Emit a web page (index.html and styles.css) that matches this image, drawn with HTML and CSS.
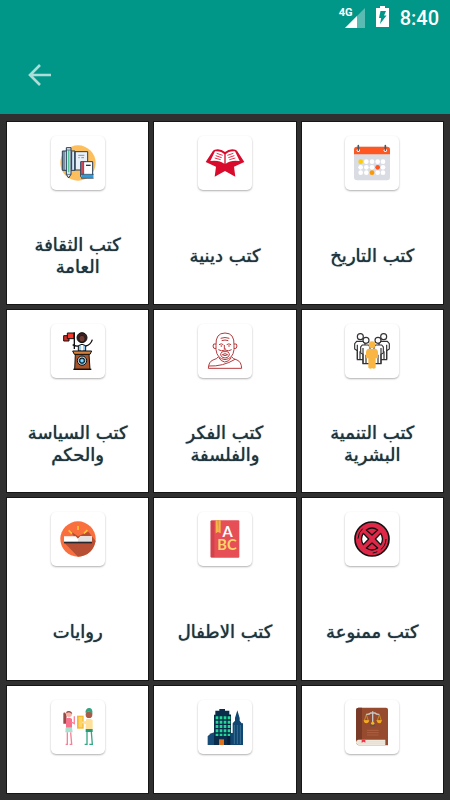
FILE: index.html
```html
<!DOCTYPE html>
<html lang="ar">
<head>
<meta charset="utf-8">
<meta name="viewport" content="width=device-width, initial-scale=1">
<title>كتب</title>
<link rel="stylesheet" href="styles.css">
</head>
<body>
<header class="header">
  <div class="status">
    <div class="signal">
      <span class="network">4G</span>
      <svg width="20" height="20" viewBox="0 0 20 20" aria-hidden="true"><path d="M20 0V20H0Z" fill="#fff" opacity=".35"/><path d="M12 8V20H0Z" fill="#fff"/></svg>
    </div>
    <svg class="battery" width="13" height="21" viewBox="0 0 13 21" aria-hidden="true"><path d="M4 0h5v2h4v19H0V2h4Z" fill="#fff"/><path d="M4.500 5H10L8 9.500h2.500L4 18l1.200-6H3Z" fill="#009788"/></svg>
    <time class="time">8:40</time>
  </div>
  <nav class="toolbar">
    <button class="back" type="button" aria-label="رجوع">
      <svg width="24" height="24" viewBox="0 0 24 24" aria-hidden="true"><path d="M23 12H2M12 2L2 12L12 22" fill="none" stroke="#acddd8" stroke-width="2.600"/></svg>
    </button>
  </nav>
</header>
<main class="grid">
  <a class="card" href="#culture">
    <span class="tile"><svg class="icon" viewBox="0 0 108 108" aria-hidden="true">
      <circle cx="54" cy="54" r="53" fill="#fdbf5e"/>
      <g stroke="#243b53" stroke-width="3">
        <path d="M7 18h38v58H7Z" fill="#d5e6f5"/><path d="M45 20h38v55H45Z" fill="#e9f0f8"/>
        <path d="M12 18v57M35 20v54M45 20v55" fill="none"/>
        <path d="M55 31h18M55 38h4m5 0h8" stroke="#8492a6" fill="none"/>
        <path d="M19 8h14v80l-7 11l-7-11Z" fill="#e8eef7"/><path d="M26 16v66" stroke="#53c59b" stroke-width="5"/>
        <path d="M19 15h14M19 88h14" stroke-width="2"/>
        <path d="M62 50h36v48H66q-4 0-4-5Z" fill="#fff"/>
      </g>
      <path d="M63 51h8v38h-8Z" fill="#cf4856"/><path d="M71 50v39" stroke="#243b53" stroke-width="2"/>
      <path d="M64 88h36v11H64Z" fill="#2f9bd8"/><path d="M63 88h38M63 100h38" stroke="#243b53" stroke-width="2"/>
      <path d="M78 61h14" stroke="#243b53" stroke-width="4"/>
    </svg></span>
    <span class="label" dir="rtl">كتب الثقافة العامة</span>
  </a>
  <a class="card" href="#religion">
    <span class="tile"><svg class="icon" viewBox="0 0 108 108" aria-hidden="true">
      <path d="M23 14Q41 10 54 21Q67 10 85 14L90 17L112 51L81 65L85 95L54 78L23 95L27 65L-4 51L18 17Z" fill="#d90b2c"/>
      <path d="M24 19Q42 17 52 28V56Q36 44 10 48Z" fill="#fff"/><path d="M84 19Q66 17 56 28V56Q72 44 98 48Z" fill="#fff"/>
      <path d="M29 25l18 6M26 32l18 6M23 39l18 5M79 25l-18 6M82 32l-18 6M85 39l-18 5" fill="none" stroke="#d90b2c" stroke-width="2.500"/>
    </svg></span>
    <span class="label" dir="rtl">كتب دينية</span>
  </a>
  <a class="card" href="#history">
    <span class="tile"><svg class="icon" viewBox="0 0 108 108" aria-hidden="true">
      <rect x="0" y="5" width="108" height="101" rx="9" fill="#d9dce2"/>
      <path d="M0 28V14Q0 5 9 5H99Q108 5 108 14V28Z" fill="#ff5722"/>
      <g fill="#fff">
        <circle cx="37" cy="50" r="7"/><circle cx="54" cy="50" r="7"/><circle cx="71" cy="50" r="7"/><circle cx="87" cy="50" r="7"/>
        <circle cx="20" cy="67" r="7"/><circle cx="37" cy="67" r="7"/><circle cx="54" cy="67" r="7"/><circle cx="87" cy="67" r="7"/>
        <circle cx="20" cy="83" r="7"/><circle cx="37" cy="83" r="7"/><circle cx="71" cy="83" r="7"/><circle cx="87" cy="83" r="7"/>
        <circle cx="13" cy="16" r="5"/><circle cx="94" cy="16" r="5"/>
      </g>
      <circle cx="20" cy="50" r="7" fill="#ffcd00"/><circle cx="71" cy="67" r="7" fill="#ff5722"/><circle cx="54" cy="83" r="7" fill="#ff9800"/>
      <path d="M13 2v14M94 2v14" stroke="#455a64" stroke-width="5" stroke-linecap="round"/>
    </svg></span>
    <span class="label" dir="rtl">كتب التاريخ</span>
  </a>
  <a class="card" href="#politics">
    <span class="tile"><svg class="icon" viewBox="0 0 108 108" aria-hidden="true">
      <g stroke="#111" stroke-width="3">
        <path d="M11 8h16v16H11Z" fill="#d82d22"/><path d="M22 0h20v17H22Z" fill="#f23b2c"/>
        <path d="M43-2v50" fill="none" stroke-width="4"/>
        <circle cx="66" cy="14" r="15" fill="#3a2022"/><ellipse cx="66" cy="17" rx="9" ry="10" fill="#6e3b33" stroke-width="2"/>
        <path d="M55 54V38Q66 30 77 38V54Z" fill="#8fcdf3"/><path d="M66 36v17" stroke="#fff" stroke-width="7"/>
        <path d="M55 39Q45 40 38 35M77 39Q92 36 97 20" fill="none" stroke-width="4"/>
        <path d="M46 63h41l3 46H44Z" fill="#a95428"/><path d="M38 54h57l-5 10H43Z" fill="#d88138"/>
        <circle cx="66" cy="83" r="14" fill="#b7cbd5"/><circle cx="66" cy="83" r="8" fill="#168bc8"/>
        <path d="M40 109h54" stroke-width="4"/>
      </g>
      <circle cx="66" cy="83" r="4" fill="#8fdcff"/>
    </svg></span>
    <span class="label" dir="rtl">كتب السياسة والحكم</span>
  </a>
  <a class="card" href="#philosophy">
    <span class="tile"><svg class="icon" viewBox="0 0 108 108" aria-hidden="true">
      <g fill="none" stroke="#b63a3d" stroke-width="3">
        <path d="M27 37Q25 0 54 0Q83 0 81 37V50Q78 77 54 80Q30 77 27 50Z"/>
        <path d="M27 33Q18 30 18 39T27 47M81 33Q90 30 90 39T81 47"/>
        <path d="M41 16q13-5 26 0M44 23q10-4 20 0M36 35q7-5 13 0M59 35q7-5 13 0M52 36v12h5"/>
        <path d="M34 50Q43 56 54 51Q65 56 74 50M41 66q0-12 13-10q13-2 13 10q-3 9-13 9t-13-9Z"/>
        <path d="M46 65q8-6 16 0q-8 6-16 0M34 71Q32 77 18 81Q5 86 4 106H104Q103 86 90 81Q76 77 74 71"/>
        <path d="M5 99Q48 101 84 79M35 73q6 12 18 14q14-1 20-13"/>
      </g>
      <circle cx="43" cy="39" r="2.500" fill="#b63a3d"/><circle cx="66" cy="39" r="2.500" fill="#b63a3d"/>
    </svg></span>
    <span class="label" dir="rtl">كتب الفكر والفلسفة</span>
  </a>
  <a class="card" href="#development">
    <span class="tile"><svg class="icon" viewBox="0 0 108 108" aria-hidden="true">
      <g fill="#fff" stroke="#333" stroke-width="3.500">
        <circle cx="19" cy="11" r="9"/><path d="M8 25H29L33 31V80H10V53L2 48V32Z"/><path d="M10 35v44M18 55v25" fill="none"/>
        <circle cx="89" cy="11" r="9"/><path d="M100 25H79L75 31V80H98V53L106 48V32Z"/><path d="M98 35v44M90 55v25" fill="none"/>
        <circle cx="36" cy="22" r="9"/><path d="M25 36H43L48 42V92H27V64L20 60V42Z"/><path d="M27 45v47M36 65v27" fill="none"/>
        <circle cx="72" cy="22" r="9"/><path d="M83 36H65L60 42V92H81V64L88 60V42Z"/><path d="M81 45v47M72 65v27" fill="none"/>
      </g>
      <g fill="#f9b642"><circle cx="54" cy="35" r="10"/><path d="M43 47H65Q72 49 72 57V76H65V104Q59 110 54 105Q49 110 43 104V76H36V57Q36 49 43 47Z"/></g>
    </svg></span>
    <span class="label" dir="rtl">كتب التنمية البشرية</span>
  </a>
  <a class="card" href="#novels">
    <span class="tile"><svg class="icon" viewBox="0 0 108 108" aria-hidden="true">
      <circle cx="54" cy="54" r="53" fill="#f9703e"/>
      <path d="M13 65L54 107Q97 104 107 60L85 32L54 46L28 28L42 46Z" fill="#b64f34"/>
      <path d="M26 28L36 38M54 15V27M82 27L72 37" stroke="#ffc532" stroke-width="5"/>
      <path d="M12 46H47L54 53L61 46H96V64H12Z" fill="#fff"/><path d="M54 53L61 46H96V63H54Z" fill="#e4e3e1"/>
      <path d="M12 62H96V67H12Z" fill="#29252a"/>
    </svg></span>
    <span class="label" dir="rtl">روايات</span>
  </a>
  <a class="card" href="#children">
    <span class="tile"><svg class="icon" viewBox="0 0 108 108" aria-hidden="true">
      <rect x="11" y="-2" width="86" height="112" rx="3" fill="#e64f55"/><path d="M11 0h11v108H11Z" fill="#d2424c"/>
      <path d="M26-2H41V37L33 33L26 37Z" fill="#f2b64b"/><path d="M31-2h4v35" fill="#dc943b"/>
      <text class="abc"><tspan class="abc-top" x="62" y="48">A</tspan><tspan class="abc-bottom" x="60" y="86">BC</tspan></text>
    </svg></span>
    <span class="label" dir="rtl">كتب الاطفال</span>
  </a>
  <a class="card" href="#banned">
    <span class="tile"><svg class="icon" viewBox="0 0 108 108" aria-hidden="true">
      <circle cx="54" cy="54" r="51" fill="#df2848" stroke="#111" stroke-width="5"/>
      <g fill="#fff" stroke="#111" stroke-width="4" stroke-linejoin="round">
        <path d="M37 27Q54 15 71 27L54 42Z" fill="#df2848"/><path d="M37 81Q54 93 71 81L54 66Z" fill="#df2848"/>
        <path d="M28 37Q17 54 28 71L44 54Z"/><path d="M80 37Q91 54 80 71L64 54Z"/>
      </g>
      <path d="M12 53Q13 33 26 23M96 54Q95 75 80 86M56 96Q64 95 70 92" fill="none" stroke="#111" stroke-width="3"/>
    </svg></span>
    <span class="label" dir="rtl">كتب ممنوعة</span>
  </a>
  <a class="card" href="#exchange" aria-label="تبادل الكتب">
    <span class="tile"><svg class="icon" viewBox="0 0 108 108" aria-hidden="true">
      <path d="M10 15Q9 10 16 11L20 20L18 44H10Z" fill="#984a46"/>
      <circle cx="27" cy="15" r="9" fill="#f5b5a6"/><path d="M18 13Q19 4 28 6Q36 7 37 15L27 10Z" fill="#a14c49"/>
      <path d="M18 28Q28 24 36 30V56H18Z" fill="#f5718c"/><path d="M34 39L43 44V22" fill="none" stroke="#f9879b" stroke-width="4"/>
      <path d="M17 56H36L38 70H16Z" fill="#a7e2d1"/>
      <path d="M22 70V106H17M32 70L35 106H29" fill="none" stroke="#f78097" stroke-width="4"/>
      <path d="M51 20H71V59H51Z" fill="#f7b92d"/><path d="M56 24H67V55H56Z" fill="#ffd56a"/>
      <circle cx="87" cy="17" r="10" fill="#a75b48"/><path d="M76 11Q77-4 89-3Q99-1 97 14L87 7Z" fill="#32a580"/>
      <path d="M78 31Q88 26 98 33V60H77V45L66 43V38L78 36Z" fill="#ffe09a"/>
      <path d="M77 60H98V69H77Z" fill="#269b7a"/><path d="M81 69V106H74M94 69L97 106H88" fill="none" stroke="#36a784" stroke-width="4"/>
    </svg></span>
  </a>
  <a class="card" href="#city" aria-label="كتب العمارة">
    <span class="tile"><svg class="icon" viewBox="0 0 108 108" aria-hidden="true">
      <path d="M2 108V82Q10 72 22 70V108Z" fill="#164c75"/>
      <path d="M21 108V17H25V5H37V0H54V5H67V17H72V108Z" fill="#092d4b"/><path d="M61 17H72V108H61Z" fill="#071f3b"/>
      <g fill="#21d995">
        <path d="M26 22h8v9h-8ZM38 22h8v9h-8ZM50 22h8v9h-8ZM62 22h8v9h-8ZM26 35h8v9h-8ZM38 35h8v9h-8ZM50 35h8v9h-8ZM62 35h8v9h-8ZM26 48h8v9h-8ZM38 48h8v9h-8ZM50 48h8v9h-8ZM62 48h8v9h-8ZM26 61h8v9h-8ZM38 61h8v9h-8ZM50 61h8v9h-8ZM62 61h8v9h-8ZM26 74h8v7h-8ZM38 74h8v7h-8ZM50 74h8v7h-8ZM62 74h8v7h-8Z"/>
      </g>
      <path d="M36 91H51V108H36Z" fill="#df711b"/>
      <path d="M70 108V72H77V43L84 35V27L91 4L98 27V35L104 43H108V108Z" fill="#10466f"/>
      <path d="M82 48V105M91 48V105M100 48V105" stroke="#3a7196" stroke-width="3"/>
    </svg></span>
  </a>
  <a class="card" href="#law" aria-label="كتب القانون">
    <span class="tile"><svg class="icon" viewBox="0 0 108 108" aria-hidden="true">
      <path d="M13-4H96Q102-4 102 2V109H13Q6 106 6 99V3Q7-4 13-4Z" fill="#964b2e"/>
      <path d="M6 3Q7-4 13-4H24V92H6Z" fill="#793b27"/>
      <path d="M13 92H94V108H13Q6 106 6 100T13 92Z" fill="#eee8dc"/><path d="M14 98H94M14 103H94" stroke="#d4cfc5" stroke-width="1"/>
      <path d="M23 92H34V101L29 98L23 101Z" fill="#ed3748"/>
      <path d="M36 16Q46 17 50 12H63Q67 17 76 16M56 7V50" fill="none" stroke="#c6c6c6" stroke-width="4"/>
      <path d="M37 17L31 35H43ZM76 17L70 35H82Z" fill="none" stroke="#dda72c" stroke-width="2"/>
      <path d="M29 34H46Q44 43 37 43T29 34ZM67 34H84Q82 43 76 43T67 34Z" fill="#f4aa1c"/>
      <circle cx="56" cy="43" r="5" fill="#f4b51d"/><path d="M49 47H64V52H49Z" fill="#555"/>
      <path d="M39 64H74M39 71H74M39 78H74" stroke="#b96a4d" stroke-width="2"/>
    </svg></span>
  </a>
</main>
</body>
</html>
```
FILE: styles.css
```css
* {
  box-sizing: border-box;
}

body {
  margin: 0;
  min-height: 100vh;
  display: flex;
  flex-direction: column;
  background: #303030;
  font-family: "DejaVu Sans", sans-serif;
}

.header {
  background: #009788;
  color: #fff;
  padding-bottom: 12px;
}

.status {
  display: flex;
  justify-content: flex-end;
  align-items: center;
  gap: 11px;
  height: 36px;
  padding-right: 11px;
}

.signal {
  position: relative;
  height: 20px;
}

.signal svg,
.battery,
.back svg {
  display: block;
}

.network {
  position: absolute;
  top: -1px;
  left: -6px;
  font: bold 11px/12px "Liberation Sans Narrow", Roboto, sans-serif;
}

.battery {
  margin-bottom: 3px;
}

.time {
  font: 500 20px/24px Roboto, sans-serif;
}

.toolbar {
  display: flex;
  align-items: center;
  height: 66px;
  padding: 12px 20px 0;
}

.back {
  padding: 8px;
  border: 0;
  background: none;
}

.grid {
  flex: 1;
  display: grid;
  grid-template-columns: repeat(3, 1fr);
  grid-template-rows: repeat(3, minmax(182px, auto)) minmax(84px, 1fr);
  gap: 6px;
  padding: 8px 7px 7px;
}

.card {
  display: flex;
  flex-direction: column;
  align-items: center;
  padding: 14px 18px 0;
  background: #fff;
  box-shadow: 0 0 0 1px #161616;
  color: #20343e;
  text-decoration: none;
}

.tile {
  display: grid;
  place-items: center;
  flex: none;
  width: 54px;
  height: 54px;
  border-radius: 5px;
  background: #fff;
  box-shadow: 0 1px 2px #00000050;
}

.icon {
  display: block;
  width: 36px;
  height: 36px;
  overflow: visible;
}

.abc {
  font-family: Lato, sans-serif;
  font-size: 44px;
  font-weight: 700;
  text-anchor: middle;
}

.abc-top {
  fill: #fff;
}

.abc-bottom {
  fill: #ffd46b;
}

.label {
  flex: 1;
  display: flex;
  align-items: center;
  justify-content: center;
  padding-top: 18px;
  font-size: 18px;
  font-weight: 400;
  line-height: 22px;
  text-align: center;
  text-shadow: 0 0 1px #20343e;
}
```
